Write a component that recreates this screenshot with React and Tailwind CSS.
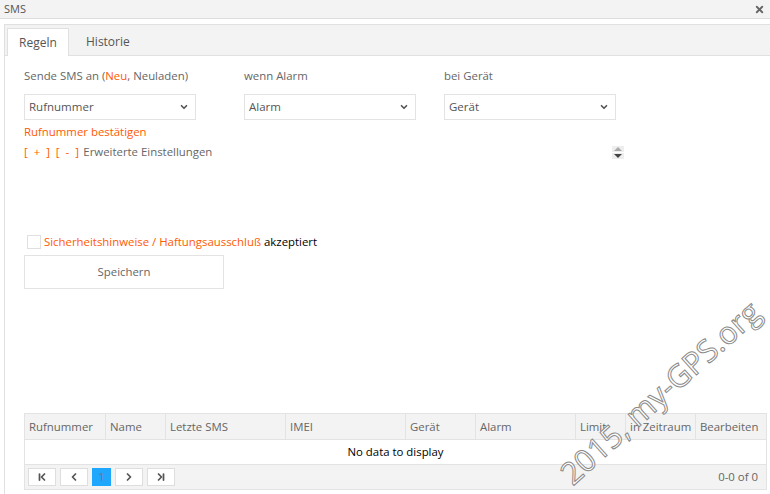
import React from 'react';
import { ChevronDown, ChevronFirst, ChevronLast, ChevronLeft, ChevronRight, X } from 'lucide-react';

const font = { fontFamily: '"Open Sans", "DejaVu Sans", sans-serif' };

const Select = ({ value }) => (
  <div className="w-[172px] h-[26px] border border-[#e3e3e3] bg-white flex items-center justify-between pl-[4px] pr-[6px] text-[11.5px] text-[#555]">
    <span>{value}</span>
    <ChevronDown size={10} strokeWidth={4} className="text-[#555]" />
  </div>
);

const columns = [
  ['Rufnummer', 'w-[81px]'],
  ['Name', 'w-[60px]'],
  ['Letzte SMS', 'w-[120px]'],
  ['IMEI', 'w-[120px]'],
  ['Gerät', 'w-[70px]'],
  ['Alarm', 'w-[100px]'],
  ['Limit', 'w-[50px]'],
  ['in Zeitraum', 'w-[70px]'],
  ['Bearbeiten', 'flex-1'],
];

const PagerButton = ({ children, active }) => (
  <div
    className={`h-[18px] flex items-center justify-center ${
      active ? 'w-[19px] bg-[#1ea7fd] text-[#777]' : 'w-[28px] bg-white border border-[#dedede] text-[#555]'
    }`}
  >
    {children}
  </div>
);

export default function App() {
  return (
    <div className="relative w-[770px] h-[494px] bg-white overflow-hidden text-[11.4px]" style={font}>
      {/* title bar */}
      <div className="h-[19px] bg-[#f3f3f3] border-b border-[#dddddd] flex items-center justify-between px-[4px]">
        <span className="text-[11px] text-[#555]">SMS</span>
        <X size={11} strokeWidth={4} className="text-[#666] mr-[1px]" />
      </div>

      <div className="mt-[5px] ml-[4px] border-l border-[#e0e0e0] h-[470px] flex flex-col">
        {/* tabs */}
        <div className="h-[32px] bg-[#f3f3f3] border-t border-b border-[#e0e0e0] flex items-end pl-[2px]">
          <div className="h-[28px] w-[62px] bg-white border-t border-l border-r border-[#e0e0e0] -mb-px flex items-center justify-center text-[#555] text-[12px]">
            Regeln
          </div>
          <div className="h-[27px] ml-[17px] flex items-center text-[#555] text-[12px]">Historie</div>
        </div>

        <div className="pl-[19px] pr-[3px] pt-[12px] flex flex-col flex-1">
          {/* selects */}
          <div className="flex">
            <div className="w-[220px] flex flex-col">
              <span className="text-[#666] leading-[16px]">
                Sende SMS an (<span className="text-[#ff5a00]">Neu</span>, Neuladen)
              </span>
              <div className="mt-[10px]"><Select value="Rufnummer" /></div>
            </div>
            <div className="w-[200px] flex flex-col">
              <span className="text-[#666] leading-[16px]">wenn Alarm</span>
              <div className="mt-[10px]"><Select value="Alarm" /></div>
            </div>
            <div className="w-[200px] flex flex-col">
              <span className="text-[#666] leading-[16px]">bei Gerät</span>
              <div className="mt-[10px]"><Select value="Gerät" /></div>
            </div>
          </div>

          <div className="mt-[3px] text-[#ff5a00] leading-[18px]">Rufnummer bestätigen</div>
          <div className="flex items-center justify-between w-[600px] mt-[2px] leading-[18px]">
            <span className="text-[#666]">
              <span className="text-[#ff5a00] tracking-[1.5px]">[ + ] [ - ]</span> Erweiterte Einstellungen
            </span>
            <div className="flex flex-col gap-[1px] w-[12px]">
              <div className="h-[6px] bg-[#eeeeee] flex items-center justify-center">
                <div className="w-0 h-0 border-l-[4px] border-r-[4px] border-b-[4px] border-l-transparent border-r-transparent border-b-[#aaa]" />
              </div>
              <div className="h-[6px] bg-[#eeeeee] flex items-center justify-center">
                <div className="w-0 h-0 border-l-[4px] border-r-[4px] border-t-[4px] border-l-transparent border-r-transparent border-t-[#444]" />
              </div>
            </div>
          </div>

          {/* accept + save */}
          <div className="mt-[73px] flex items-center ml-[3px] leading-[16px]">
            <div className="w-[14px] h-[14px] border border-[#e0e0e0] bg-white mr-[3px]" />
            <span className="text-[#ff5a00]">Sicherheitshinweise / Haftungsausschluß</span>
            <span className="text-black ml-[3px]">akzeptiert</span>
          </div>
          <div className="mt-[5px] w-[200px] h-[34px] border border-[#e3e3e3] bg-white flex items-center justify-center text-[#666]">
            Speichern
          </div>

          {/* table */}
          <div className="mt-auto mb-[4px] border border-[#e3e3e3] w-[743px]">
            <div className="h-[26px] bg-[#f3f3f3] flex border-b border-[#e3e3e3]">
              {columns.map(([label, w], i) => (
                <div
                  key={label}
                  className={`${w} flex items-center pl-[4px] text-[#666] whitespace-nowrap overflow-hidden ${i < columns.length - 1 ? 'border-r border-[#e3e3e3]' : ''}`}
                >
                  {label}
                </div>
              ))}
            </div>
            <div className="h-[25px] flex items-center justify-center text-black border-b border-[#e3e3e3]">
              No data to display
            </div>
            <div className="h-[24px] bg-[#f3f3f3] flex items-center justify-between pl-[3px] pr-[8px]">
              <div className="flex items-center gap-[4px]">
                <PagerButton><ChevronFirst size={12} strokeWidth={3.5} /></PagerButton>
                <PagerButton><ChevronLeft size={12} strokeWidth={3.5} /></PagerButton>
                <PagerButton active>1</PagerButton>
                <PagerButton><ChevronRight size={12} strokeWidth={3.5} /></PagerButton>
                <PagerButton><ChevronLast size={12} strokeWidth={3.5} /></PagerButton>
              </div>
              <span className="text-[#666]">0-0 of 0</span>
            </div>
          </div>
        </div>
      </div>

      {/* watermark */}
      <div
        className="absolute left-[510px] top-[377px] w-[300px] text-center text-[31px] leading-none whitespace-nowrap text-white pointer-events-none origin-center -rotate-[42deg]"
        style={{ fontFamily: '"Open Sans", "DejaVu Sans", sans-serif', WebkitTextStroke: '1px #8a8a8a' }}
      >
        2015, my-GPS.org
      </div>
    </div>
  );
}
